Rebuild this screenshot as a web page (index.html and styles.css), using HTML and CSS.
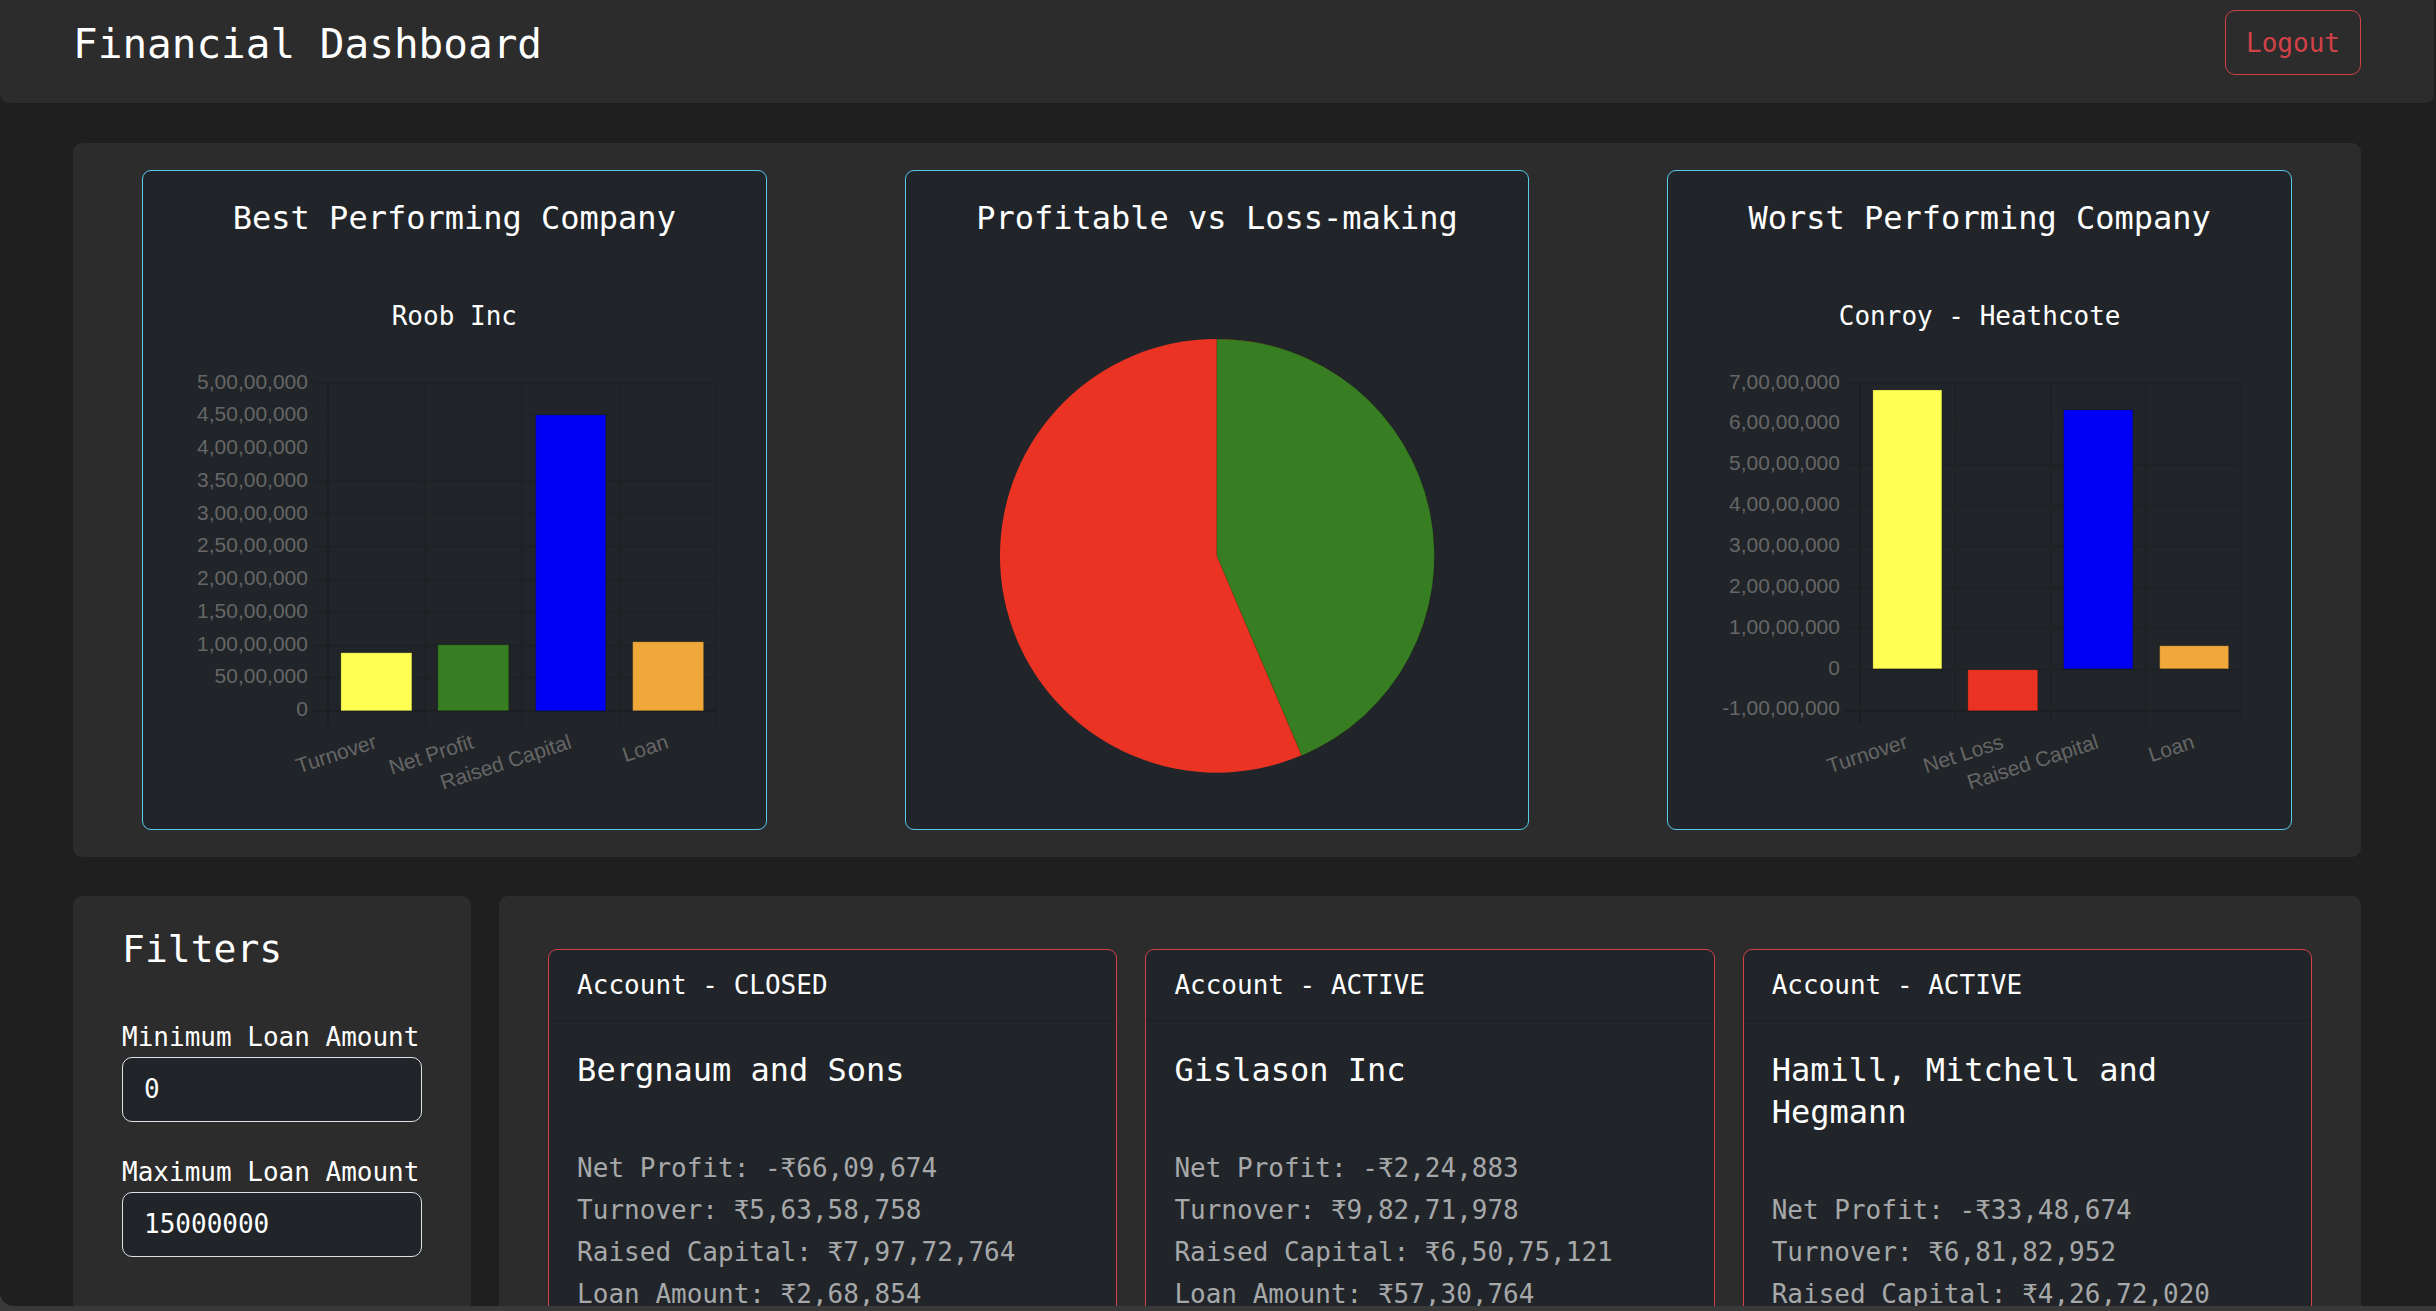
FILE: index.html
```html
<!DOCTYPE html>
<html lang="en">
<head>
<meta charset="utf-8">
<title>Financial Dashboard</title>
<link rel="stylesheet" href="styles.css">
</head>
<body>
<div class="page">
  <header class="topbar">
    <h1 class="brand">Financial Dashboard</h1>
    <button class="logout" type="button">Logout</button>
  </header>

  <main class="content">
    <section class="panel summary">
      <article class="chart-card">
        <h2 class="card-title">Best Performing Company</h2>
        <p class="company">Roob Inc</p>
        <svg class="chart" viewBox="0 -1 567 462" role="img" aria-label="Roob Inc figures">
          <path class="grid" d="M142 43H545M142 76H545M142 108H545M142 141H545M142 174H545M142 207H545M142 240H545M142 273H545M142 306H545M142 338H545M254 43V385M351 43V385M449 43V385M545 43V385"/>
          <path class="grid axis" d="M157 43V385M142 371H545"/>
          <g class="bars">
            <rect class="yellow" x="170" y="313" width="71" height="58"/>
            <rect class="green" x="267" y="305" width="71" height="66"/>
            <rect class="blue" x="365" y="75" width="70" height="296"/>
            <rect class="orange" x="462" y="302" width="71" height="69"/>
          </g>
          <g class="scale">
            <text x="137" y="49">5,00,00,000</text>
            <text x="137" y="81">4,50,00,000</text>
            <text x="137" y="114">4,00,00,000</text>
            <text x="137" y="147">3,50,00,000</text>
            <text x="137" y="180">3,00,00,000</text>
            <text x="137" y="212">2,50,00,000</text>
            <text x="137" y="245">2,00,00,000</text>
            <text x="137" y="278">1,50,00,000</text>
            <text x="137" y="311">1,00,00,000</text>
            <text x="137" y="343">50,00,000</text>
            <text x="137" y="376">0</text>
            <text transform="translate(207 408) rotate(-18)">Turnover</text>
            <text transform="translate(304 408) rotate(-18)">Net Profit</text>
            <text transform="translate(402 408) rotate(-18)">Raised Capital</text>
            <text transform="translate(499 408) rotate(-18)">Loan</text>
          </g>
        </svg>
      </article>

      <article class="chart-card">
        <h2 class="card-title">Profitable vs Loss-making</h2>
        <svg class="chart" viewBox="0 -2 567 562" role="img" aria-label="Share of profitable and loss-making companies">
          <g class="slices">
            <circle class="red" cx="283" cy="315" r="217"/>
            <path class="green" d="M283 315V98A217 217 0 0 1 368 515Z"/>
          </g>
        </svg>
      </article>

      <article class="chart-card">
        <h2 class="card-title">Worst Performing Company</h2>
        <p class="company">Conroy - Heathcote</p>
        <svg class="chart" viewBox="0 -1 567 462" role="img" aria-label="Conroy - Heathcote figures">
          <path class="grid" d="M149 43H545M149 84H545M149 125H545M149 166H545M149 207H545M149 248H545M149 289H545M149 330H545M259 43V385M355 43V385M450 43V385M545 43V385"/>
          <path class="grid axis" d="M164 43V385M149 371H545"/>
          <g class="bars">
            <rect class="yellow" x="177" y="50" width="69" height="279"/>
            <rect class="red" x="272" y="330" width="70" height="41"/>
            <rect class="blue" x="368" y="70" width="69" height="259"/>
            <rect class="orange" x="464" y="306" width="69" height="23"/>
          </g>
          <g class="scale">
            <text x="144" y="49">7,00,00,000</text>
            <text x="144" y="89">6,00,00,000</text>
            <text x="144" y="130">5,00,00,000</text>
            <text x="144" y="171">4,00,00,000</text>
            <text x="144" y="212">3,00,00,000</text>
            <text x="144" y="253">2,00,00,000</text>
            <text x="144" y="294">1,00,00,000</text>
            <text x="144" y="335">0</text>
            <text x="144" y="375">-1,00,00,000</text>
            <text transform="translate(213 408) rotate(-18)">Turnover</text>
            <text transform="translate(309 408) rotate(-18)">Net Loss</text>
            <text transform="translate(404 408) rotate(-18)">Raised Capital</text>
            <text transform="translate(500 408) rotate(-18)">Loan</text>
          </g>
        </svg>
      </article>
    </section>

    <div class="columns">
      <aside class="panel filters">
        <h2 class="filters-title">Filters</h2>
        <div class="field">
          <label for="min-loan">Minimum Loan Amount</label>
          <input id="min-loan" type="text" inputmode="numeric" value="0">
        </div>
        <div class="field">
          <label for="max-loan">Maximum Loan Amount</label>
          <input id="max-loan" type="text" inputmode="numeric" value="15000000">
        </div>
      </aside>

      <section class="panel accounts">
        <article class="account">
          <div class="account-status">Account - CLOSED</div>
          <div class="account-body">
            <h3 class="account-name">Bergnaum and Sons</h3>
            <p>Net Profit: -₹66,09,674</p>
            <p>Turnover: ₹5,63,58,758</p>
            <p>Raised Capital: ₹7,97,72,764</p>
            <p>Loan Amount: ₹2,68,854</p>
          </div>
        </article>
        <article class="account">
          <div class="account-status">Account - ACTIVE</div>
          <div class="account-body">
            <h3 class="account-name">Gislason Inc</h3>
            <p>Net Profit: -₹2,24,883</p>
            <p>Turnover: ₹9,82,71,978</p>
            <p>Raised Capital: ₹6,50,75,121</p>
            <p>Loan Amount: ₹57,30,764</p>
          </div>
        </article>
        <article class="account">
          <div class="account-status">Account - ACTIVE</div>
          <div class="account-body">
            <h3 class="account-name">Hamill, Mitchell and Hegmann</h3>
            <p>Net Profit: -₹33,48,674</p>
            <p>Turnover: ₹6,81,82,952</p>
            <p>Raised Capital: ₹4,26,72,020</p>
          </div>
        </article>
      </section>
    </div>
  </main>
</div>
</body>
</html>
```

FILE: styles.css
```css
* {
  box-sizing: border-box;
}

html {
  background: #393939;
}

body {
  margin: 0;
  color: #fff;
  font-family: Consolas, "DejaVu Sans Mono", monospace;
  font-size: 26px;
  line-height: 42px;
}

h1, h2, h3, p {
  margin: 0;
  font-weight: 400;
}

.page {
  height: calc(100vh - 5px);
  padding-right: 2px;
  overflow: hidden;
  background: #1f1f1f;
  border-radius: 0 0 0 14px;
}

.topbar {
  display: flex;
  align-items: flex-start;
  justify-content: space-between;
  padding: 10px 3% 25px;
  background: #2c2c2c;
  border-radius: 0 0 9px 9px;
}

.brand {
  font-size: 41px;
  line-height: 68px;
}

.logout {
  padding: 11px 20px 10px;
  color: #d04148;
  font: inherit;
  background: transparent;
  border: 1px solid #d04148;
  border-radius: 10px;
}

.content {
  padding: 40px 3% 0;
}

.panel {
  background: #2c2c2c;
  border-radius: 9px;
}

.summary {
  display: flex;
  justify-content: space-around;
  padding: 27px 0;
}

.chart-card {
  flex: 0 0 27.3%;
  padding: 26px 28px 28px;
  text-align: center;
  background: #212529;
  border: 1px solid #5bc8ec;
  border-radius: 9px;
}

.card-title {
  font-size: 32px;
}

.company {
  margin: 56px 0 2px;
}

.chart {
  display: block;
  width: 100%;
}

.grid {
  fill: none;
  stroke: #1f2225;
  stroke-width: 2;
}

.axis {
  stroke: #1c1f22;
}

.scale {
  fill: #666;
  font-family: Arial, "Liberation Sans", sans-serif;
  font-size: 21px;
  text-anchor: end;
}

.bars rect {
  stroke: rgba(0, 0, 0, 0.2);
}

.slices .green {
  stroke: rgba(0, 0, 0, 0.2);
}

.yellow { fill: #ffff54; }
.green { fill: #377d22; }
.blue { fill: #0000f5; }
.orange { fill: #f0a83b; }
.red { fill: #ea3323; }

.columns {
  display: flex;
  gap: 28px;
  margin-top: 39px;
}

.filters {
  flex: 0 0 17.4%;
  padding: 30px 49px;
}

.filters-title {
  margin-bottom: 45px;
  font-size: 38px;
  line-height: 46px;
}

.field {
  display: flex;
  flex-direction: column;
  margin-bottom: 30px;
}

.field label {
  line-height: 40px;
  white-space: nowrap;
}

.field input {
  width: 100%;
  height: 65px;
  padding: 0 21px;
  color: #fff;
  font: inherit;
  background: #212529;
  border: 1px solid #dee2e6;
  border-radius: 10px;
}

.accounts {
  display: grid;
  flex: 1;
  grid-template-columns: repeat(3, 1fr);
  gap: 28px;
  padding: 53px 49px;
}

.account {
  background: #212529;
  border: 1px solid #d04148;
  border-radius: 9px;
}

.account-status {
  padding: 14px 28px;
  border-bottom: 1px solid #1b1e21;
}

.account-body {
  padding: 28px;
  color: #a6a8a9;
}

.account-name {
  margin-bottom: 56px;
  color: #fff;
  font-size: 32px;
}
```
